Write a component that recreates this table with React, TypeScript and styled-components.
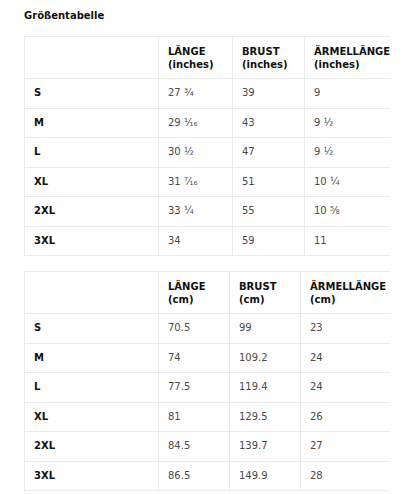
import React from "react";
import styled, { createGlobalStyle } from "styled-components";

const GlobalStyle = createGlobalStyle`
	html, body {
		margin: 0;
		padding: 0;
		background: #fff;
		font-family: "DejaVu Sans", "Noto Sans", sans-serif;
	}
`;

const Page = styled.div`
	padding: 10px 24px 0 24px;
`;

const Title = styled.h3`
	margin: 0 0 14px 0;
	font-size: 10px;
	line-height: 12px;
	font-weight: bold;
	color: #111;
`;

const Scroller = styled.div`
	overflow: hidden;
	margin-bottom: 15px;
`;

const Table = styled.table<{ w: number }>`
	width: ${(p) => p.w}px;
	min-width: ${(p) => p.w}px;
	border-collapse: collapse;
	table-layout: fixed;
	font-size: 10px;
	line-height: 12.5px;
`;

const Th = styled.th<{ w: number }>`
	box-sizing: border-box;
	width: ${(p) => p.w}px;
	text-align: left;
	vertical-align: top;
	font-weight: bold;
	color: #111;
	padding: 9px 9px 7px 9px;
	border: 1px solid #ebebeb;
	white-space: nowrap;
`;

const SizeCell = styled.td`
	padding: 8px 9px;
	border: 1px solid #ebebeb;
	font-weight: bold;
	color: #111;
`;

const ValueCell = styled.td`
	padding: 8px 9px;
	border: 1px solid #ebebeb;
	color: #4a4a4a;
	white-space: nowrap;
`;

type Chart = {
	unit: string;
	widths: number[];
	rows: [string, string, string, string][];
};

const charts: Chart[] = [
	{
		unit: "inches",
		widths: [134, 74, 72, 100],
		rows: [
			["S", "27 ¾", "39", "9"],
			["M", "29 ¹⁄₁₆", "43", "9 ½"],
			["L", "30 ½", "47", "9 ½"],
			["XL", "31 ⁷⁄₁₆", "51", "10 ¼"],
			["2XL", "33 ¼", "55", "10 ⅝"],
			["3XL", "34", "59", "11"],
		],
	},
	{
		unit: "cm",
		widths: [134, 71, 71, 100],
		rows: [
			["S", "70.5", "99", "23"],
			["M", "74", "109.2", "24"],
			["L", "77.5", "119.4", "24"],
			["XL", "81", "129.5", "26"],
			["2XL", "84.5", "139.7", "27"],
			["3XL", "86.5", "149.9", "28"],
		],
	},
];

const headings = ["LÄNGE", "BRUST", "ÄRMELLÄNGE"];

function SizeTable({ chart }: { chart: Chart }) {
	const total = chart.widths.reduce((a, b) => a + b, 0);
	return (
		<Scroller>
			<Table w={total}>
				<thead>
					<tr>
						<Th w={chart.widths[0]}></Th>
						{headings.map((h, i) => (
							<Th key={h} w={chart.widths[i + 1]}>
								{h}
								<br />({chart.unit})
							</Th>
						))}
					</tr>
				</thead>
				<tbody>
					{chart.rows.map((row) => (
						<tr key={row[0]}>
							<SizeCell>{row[0]}</SizeCell>
							<ValueCell>{row[1]}</ValueCell>
							<ValueCell>{row[2]}</ValueCell>
							<ValueCell>{row[3]}</ValueCell>
						</tr>
					))}
				</tbody>
			</Table>
		</Scroller>
	);
}

export default function App() {
	return (
		<>
			<GlobalStyle />
			<Page>
				<Title>Größentabelle</Title>
				{charts.map((c) => (
					<SizeTable key={c.unit} chart={c} />
				))}
			</Page>
		</>
	);
}
